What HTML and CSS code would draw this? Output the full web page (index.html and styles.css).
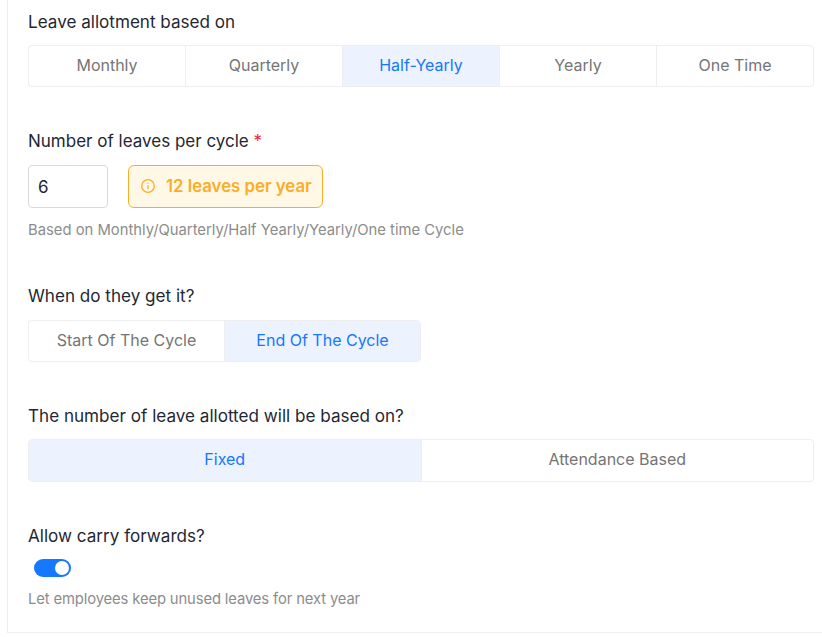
FILE: index.html
```html
<!DOCTYPE html>
<html lang="en">
<head>
<meta charset="utf-8">
<title>Leave allotment</title>
<link rel="stylesheet" href="styles.css">
</head>
<body>
<main class="card">
  <section class="field f1">
    <div class="label">Leave allotment based on</div>
    <div class="seg">
      <div class="opt">Monthly</div>
      <div class="opt">Quarterly</div>
      <div class="opt on">Half-Yearly</div>
      <div class="opt">Yearly</div>
      <div class="opt">One Time</div>
    </div>
  </section>
  <section class="field f2">
    <div class="label">Number of leaves per cycle <span class="req">*</span></div>
    <div class="row">
      <div class="input">6</div>
      <div class="note">
        <svg class="info" width="16" height="16" viewBox="0 0 16 16" fill="none" stroke="#faad26" stroke-width="1.3" stroke-linecap="round"><circle cx="8" cy="8" r="6.3"/><path d="M8 7.6v3.2M8 5.2v.1"/></svg>
        <span>12 leaves per year</span>
      </div>
    </div>
    <div class="hint h1">Based on Monthly/Quarterly/Half Yearly/Yearly/One time Cycle</div>
  </section>
  <section class="field f3">
    <div class="label">When do they get it?</div>
    <div class="seg short">
      <div class="opt">Start Of The Cycle</div>
      <div class="opt on">End Of The Cycle</div>
    </div>
  </section>
  <section class="field f4">
    <div class="label">The number of leave allotted will be based on?</div>
    <div class="seg tall">
      <div class="opt on">Fixed</div>
      <div class="opt">Attendance Based</div>
    </div>
  </section>
  <section class="field f5">
    <div class="label">Allow carry forwards?</div>
    <div class="toggle"><span class="knob"></span></div>
    <div class="hint h2">Let employees keep unused leaves for next year</div>
  </section>
</main>
</body>
</html>
```
FILE: styles.css
```css
* { box-sizing: border-box; }
html, body { margin: 0; height: 637px; overflow: hidden; background: #fff; }
body { font-family: "Inter", "Liberation Sans", sans-serif; color: #1f2733; }
.card {
  margin-left: 7px;
  height: 633px;
  padding: 0 8px 0 20px;
  border-left: 1px solid #eeeeee;
  border-bottom: 1px solid #eeeeee;
  display: flex;
  flex-direction: column;
}
.field { display: flex; flex-direction: column; }
.f1 { padding-top: 12px; }
.f2 { padding-top: 44px; }
.f3 { padding-top: 47px; }
.f4 { padding-top: 44px; }
.f5 { padding-top: 44px; }
.label { font-size: 17.1px; line-height: 20px; color: #1f2733; }
.f2 .label { font-size: 17px; }
.req { color: #f5222d; }
.seg {
  margin-top: 13px;
  display: flex;
  height: 42px;
  border: 1px solid #eeeeee;
  border-radius: 4px;
  overflow: hidden;
  background: #fff;
}
.f3 .seg { margin-top: 14px; }
.seg.short { width: 393px; }
.seg.tall { height: 43px; }
.opt {
  flex: 1 1 0;
  display: flex;
  align-items: center;
  justify-content: center;
  padding-bottom: 2px;
  font-size: 16px;
  color: #757575;
  border-right: 1px solid #eeeeee;
}
.opt:last-child { border-right: 0; }
.tall .opt { padding-bottom: 3px; }
.opt.on { background: #ecf2fe; color: #1677ff; }
.row { margin-top: 14px; display: flex; gap: 20px; }
.input {
  width: 80px;
  height: 43px;
  padding-left: 9px;
  display: flex;
  align-items: center;
  font-size: 17px;
  color: #1f2733;
  border: 1px solid #d9d9d9;
  border-radius: 4px;
}
.note {
  height: 43px;
  padding: 0 10px 2px 11px;
  display: flex;
  align-items: center;
  gap: 10px;
  font-size: 16.8px;
  font-weight: 600;
  color: #faad26;
  background: #fff8e6;
  border: 1px solid #faad26;
  border-radius: 6px;
}
.info { flex: none; }
.hint { font-size: 14.8px; line-height: 18px; color: #8c8c8c; }
.h1 { margin-top: 13px; }
.h2 { margin-top: 13px; letter-spacing: -0.13px; }
.toggle {
  margin: 13px 0 0 6px;
  width: 37px;
  height: 18px;
  border-radius: 9px;
  background: #1677ff;
  position: relative;
}
.knob {
  position: absolute;
  top: 2px;
  right: 2px;
  width: 14px;
  height: 14px;
  border-radius: 50%;
  background: #fff;
}
```
